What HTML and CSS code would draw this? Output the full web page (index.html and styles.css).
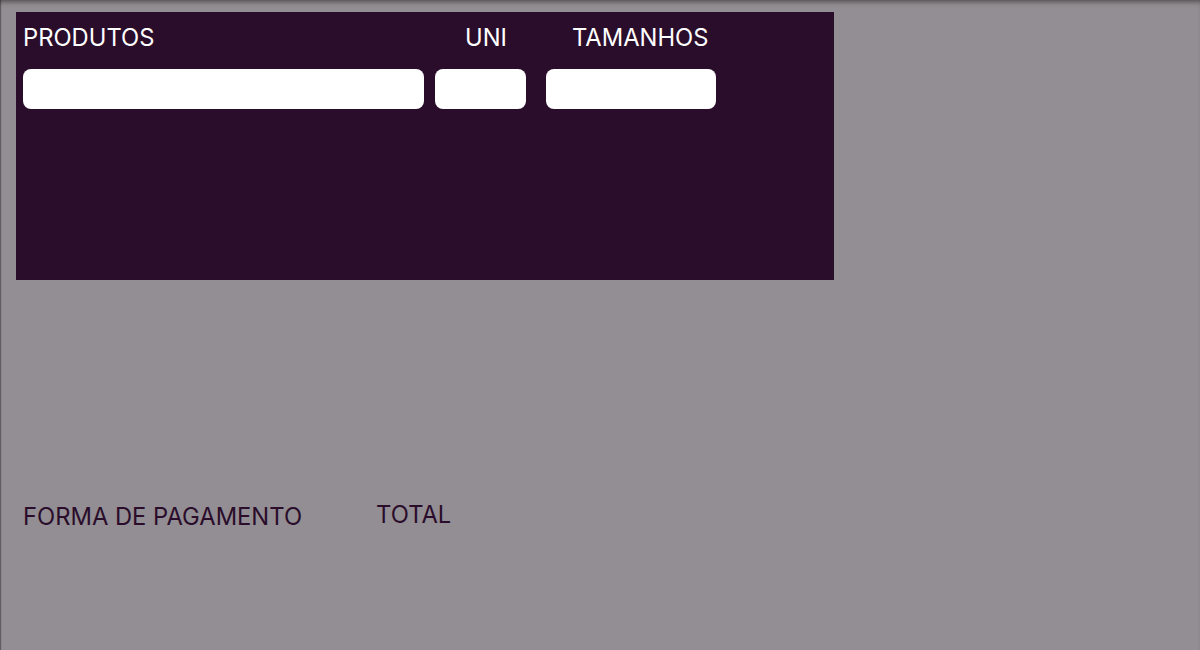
FILE: index.html
```html
<!DOCTYPE html>
<html lang="pt">
<head>
<meta charset="utf-8">
<title>Pedido</title>
<link rel="stylesheet" href="styles.css">
</head>
<body>
<div class="screen">
  <section class="panel">
    <div class="field field-prod">
      <label class="label">PRODUTOS</label>
      <input class="input" type="text">
    </div>
    <div class="field field-uni">
      <label class="label">UNI</label>
      <input class="input" type="text">
    </div>
    <div class="field field-tam">
      <label class="label">TAMANHOS</label>
      <input class="input" type="text">
    </div>
  </section>
  <div class="footer">
    <span class="foot-label pay">FORMA DE PAGAMENTO</span>
    <span class="foot-label total">TOTAL</span>
  </div>
</div>
</body>
</html>
```
FILE: styles.css
```css
html, body {
  margin: 0;
  padding: 0;
  background: #938e93;
  font-family: Inter, "Noto Sans", sans-serif;
}
.screen {
  min-height: 650px;
  box-sizing: border-box;
  padding: 12px 0 0 16px;
  box-shadow: inset 0 5px 5px -3px rgba(0,0,0,0.45), inset 2px 0 1px -1px rgba(0,0,0,0.35);
}
.panel {
  width: 818px;
  height: 268px;
  box-sizing: border-box;
  background: #2a0d2b;
  padding: 11px 0 0 7px;
  display: flex;
  align-items: flex-start;
}
.field {
  display: flex;
  flex-direction: column;
}
.label {
  color: #ffffff;
  font-size: 23.75px;
  line-height: 29px;
  margin-bottom: 17px;
  white-space: nowrap;
}
.input {
  height: 40px;
  border: none;
  border-radius: 8px;
  background: #ffffff;
  box-sizing: border-box;
  padding: 0;
  outline: none;
}
.field-prod .input { width: 401px; }
.field-uni { margin-left: 11px; }
.field-uni .label { padding-left: 30px; }
.field-uni .input { width: 91px; }
.field-tam { margin-left: 20px; }
.field-tam .label { padding-left: 26px; }
.field-tam .input { width: 170px; }
.footer {
  display: flex;
  align-items: flex-start;
  padding: 220px 0 0 7px;
}
.foot-label {
  color: #2a0d2b;
  font-size: 23.75px;
  line-height: 29px;
  white-space: nowrap;
}
.pay { margin-top: 2px; }
.total { margin-left: 74px; }
```
